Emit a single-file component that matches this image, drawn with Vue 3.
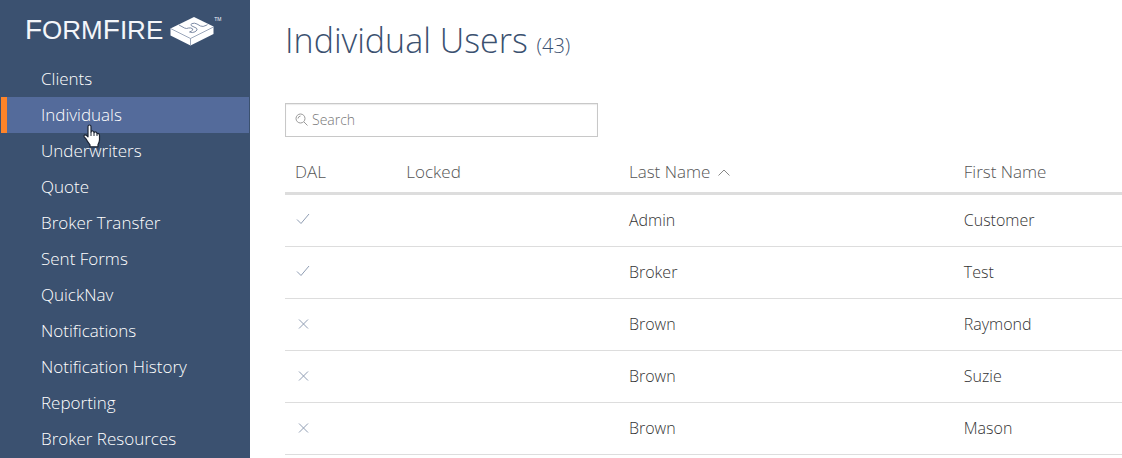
<script setup>
import { ref, computed } from 'vue'

const menuItems = [
  'Clients',
  'Individuals',
  'Underwriters',
  'Quote',
  'Broker Transfer',
  'Sent Forms',
  'QuickNav',
  'Notifications',
  'Notification History',
  'Reporting',
  'Broker Resources'
]
const activeItem = ref('Individuals')

const total = 43
const users = [
  { id: 1, dal: true, lastName: 'Admin', firstName: 'Customer' },
  { id: 2, dal: true, lastName: 'Broker', firstName: 'Test' },
  { id: 3, dal: false, lastName: 'Brown', firstName: 'Raymond' },
  { id: 4, dal: false, lastName: 'Brown', firstName: 'Suzie' },
  { id: 5, dal: false, lastName: 'Brown', firstName: 'Mason' }
]

const search = ref('')

const filteredUsers = computed(() => {
  const query = search.value.trim().toLowerCase()
  if (!query) return users
  return users.filter(user =>
    `${user.firstName} ${user.lastName}`.toLowerCase().includes(query)
  )
})
</script>

<template>
  <div class="app">
    <aside class="sidebar">
      <a href="#" class="logo">
        <span class="logo-text"><span class="cap">F</span>ORM<span class="cap">F</span>IRE</span>
        <svg class="logo-mark" width="44" height="30" viewBox="0 0 44 30">
          <path d="M0.5 12.5 L24 1 L43.5 10.5 V18 L20.5 29.5 L0.5 19.5 Z" fill="#fff" />
          <path
            d="M0.5 12.5 L20.5 22.5 L43.5 11 M20.5 22.5 V29.5"
            fill="none" stroke="#8290aa" stroke-width="0.8"
          />
          <path
            d="M9 9 L14.5 12 Q16.5 13 18.5 12 Q21 11.5 22.5 12.8 Q23.6 14 21.5 15 L19.5 16 Q22.5 17.2 25 15.8 Q28.5 14 26.5 12.2 L21.5 9.8 Q20 8.4 22 7.6 Q24.5 6.6 27 8 L30.5 10 Q33 11.2 36 9.4 L37.5 8.6"
            fill="none" stroke="#6f7f9c" stroke-width="0.9"
          />
        </svg>
        <span class="trademark">TM</span>
      </a>

      <nav class="menu">
        <a
          v-for="item in menuItems"
          :key="item"
          href="#"
          class="menu-item"
          :class="{ active: item === activeItem }"
          @click.prevent="activeItem = item"
        >{{ item }}</a>
      </nav>

      <svg class="pointer" width="18" height="24" viewBox="0 0 18 24">
        <path
          d="M5 2.5 Q5 1 6.5 1 Q8 1 8 2.5 V8 Q8.5 6.6 9.8 7 Q10.9 7.2 11 8.6 Q12 7.4 13 8 Q13.9 8.4 14 9.8 Q15.2 9 16 10 Q16.6 10.7 16.5 12 V16 Q16.3 18.5 15 20.5 V22.8 H7 V20.8 Q4.2 17.5 3 14.8 L1.2 12.8 Q0.6 11.6 1.6 11 Q3 10.4 5 12.8 Z"
          fill="#fff" stroke="#1c2433" stroke-width="1.2" stroke-linejoin="round"
        />
        <path d="M8 8 V12 M11 8.8 V12 M14 10 V12" stroke="#1c2433" stroke-width="1" />
      </svg>
    </aside>

    <main class="content">
      <h1 class="title">Individual Users <small>({{ total }})</small></h1>

      <label class="search">
        <svg width="14" height="14" viewBox="0 0 14 14" fill="none" stroke="#999">
          <circle cx="5.5" cy="5.5" r="4.5" />
          <path d="M3 5.5 Q3.2 3.4 5.5 3 M9 9 L12.5 12.5" />
        </svg>
        <input v-model="search" type="text" placeholder="Search" aria-label="Search" />
      </label>

      <table class="users">
        <colgroup>
          <col class="col-dal" />
          <col class="col-locked" />
          <col class="col-last" />
          <col />
        </colgroup>
        <thead>
          <tr>
            <th>DAL</th>
            <th>Locked</th>
            <th>
              Last Name
              <svg class="sort" width="12" height="7" viewBox="0 0 12 7">
                <path d="M0.5 6.5 L6 1 L11.5 6.5" fill="none" stroke="#888" />
              </svg>
            </th>
            <th>First Name</th>
          </tr>
        </thead>
        <tbody>
          <tr v-for="user in filteredUsers" :key="user.id">
            <td class="flag">
              <svg v-if="user.dal" width="16" height="12" viewBox="0 0 16 12">
                <path d="M2 6.5 L6 10.5 L14 1" fill="none" stroke="#8f9db3" />
              </svg>
              <svg v-else width="16" height="12" viewBox="0 0 16 12">
                <path d="M4 2.5 L13 11.5 M13 2.5 L4 11.5" fill="none" stroke="#8f9db3" />
              </svg>
            </td>
            <td></td>
            <td>{{ user.lastName }}</td>
            <td>{{ user.firstName }}</td>
          </tr>
        </tbody>
      </table>
    </main>
  </div>
</template>

<style>
body {
  background: #fff;
}
</style>

<style scoped>
.app {
  display: flex;
  min-height: 100vh;
  font-family: "Open Sans", sans-serif;
  font-weight: 300;
  color: #333;
}

.sidebar {
  position: relative;
  flex: 0 0 250px;
  box-sizing: border-box;
  padding: 0 1px;
  background: #3b5170;
}

.logo {
  display: flex;
  align-items: center;
  height: 61px;
  padding-left: 24px;
  color: #f4f6fa;
  text-decoration: none;
}

.logo-text {
  padding-bottom: 2px;
  font: 26px/30px "Liberation Sans", Arial, sans-serif;
}

.cap {
  font-size: 28px;
}

.logo-mark {
  margin-left: 7px;
}

.trademark {
  align-self: flex-start;
  margin-top: 16px;
  font: 5px "Liberation Sans", Arial, sans-serif;
}

.menu {
  display: flex;
  flex-direction: column;
}

.menu-item {
  padding-left: 34px;
  border-left: 6px solid transparent;
  font-size: 17px;
  line-height: 36px;
  color: #fff;
  text-decoration: none;
}

.menu-item.active {
  background: #546b9b;
  border-left-color: #ff8429;
}

.pointer {
  position: absolute;
  top: 124px;
  left: 83px;
}

.content {
  flex: 1;
  min-width: 0;
  padding: 16px 0 0 35px;
}

.title {
  margin: 0 0 39px;
  font-size: 34px;
  font-weight: 300;
  line-height: 48px;
  color: #3b5170;
}

.title small {
  font-size: 20px;
  line-height: 20px;
}

.search {
  display: flex;
  align-items: center;
  gap: 3px;
  box-sizing: border-box;
  width: 313px;
  max-width: 100%;
  height: 34px;
  padding: 0 9px;
  border: 1px solid #c8c8c8;
  box-shadow: inset 0 1px 1px rgba(0, 0, 0, 0.08);
}

.search input {
  flex: 1;
  min-width: 0;
  padding: 0 0 1px;
  border: 0;
  outline: 0;
  background: none;
  font: inherit;
  font-size: 14px;
  color: #333;
}

.search input::placeholder {
  color: #777;
  opacity: 1;
}

.users {
  width: 100%;
  margin-top: 15px;
  border-collapse: collapse;
  table-layout: fixed;
  font-size: 16px;
}

.users th {
  height: 38px;
  padding: 0 10px 2px;
  border-bottom: 3px solid #ddd;
  font-size: 17px;
  font-weight: 300;
  text-align: left;
  color: #555;
}

.users td {
  height: 49px;
  padding: 0 10px 2px;
  border-bottom: 1px solid #ddd;
}

.users .flag {
  height: 47px;
  padding-bottom: 4px;
}

.flag svg {
  display: block;
}

.col-dal {
  width: 13.3%;
}

.col-locked {
  width: 26.6%;
}

.col-last {
  width: 40%;
}

.sort {
  margin-left: 3px;
  vertical-align: 2px;
}
</style>
